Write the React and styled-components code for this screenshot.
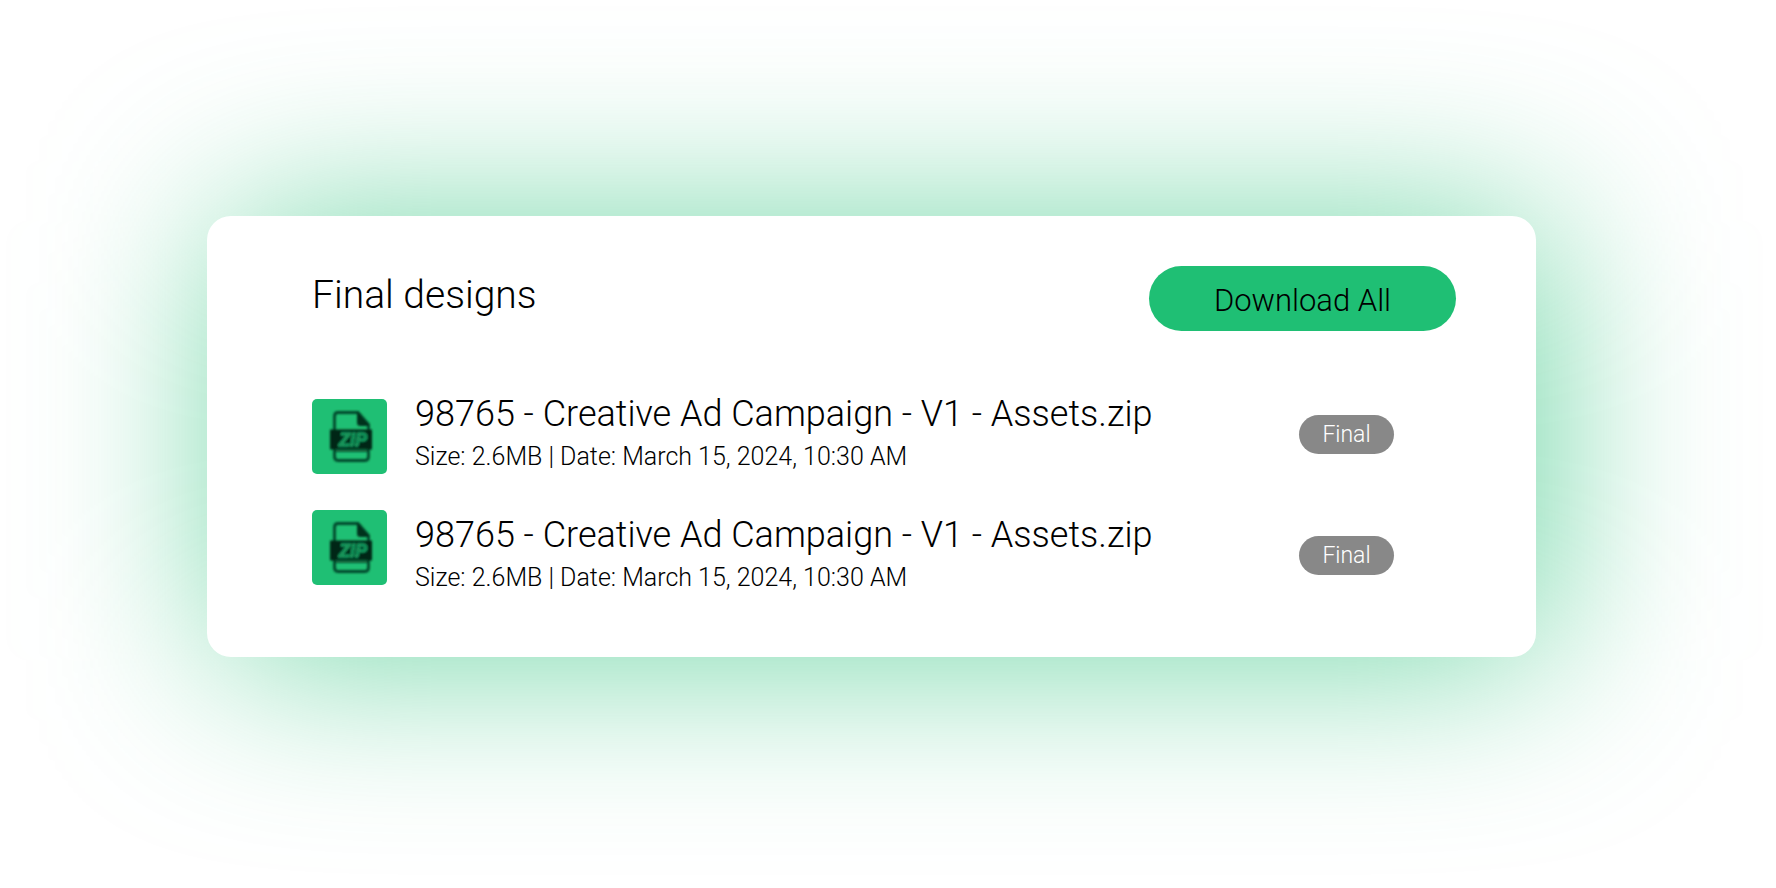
import React from 'react';
import styled, { createGlobalStyle } from 'styled-components';

const GREEN = '#1fbf74';

const GlobalStyle = createGlobalStyle`
  *, *::before, *::after { box-sizing: border-box; }
  body {
    margin: 0;
    background: #fff;
    color: #000;
    font-family: Roboto, "Liberation Sans", sans-serif;
    font-weight: 300;
  }
`;

const Page = styled.main`
  min-height: 100vh;
  padding: 216px 240px 231px 207px;
  overflow: hidden;
`;

const Glow = styled.div`
  position: relative;
  isolation: isolate;

  &::before {
    content: "";
    position: absolute;
    z-index: -1;
    inset: 4px -13px -4px 13px;
    border-radius: 24px;
    background: rgba(31, 191, 116, 0.64);
    filter: blur(92px);
    will-change: filter;
  }
`;

const Card = styled.section`
  padding: 50px 80px 62px 105px;
  border-radius: 24px;
  background: #fff;
`;

const Header = styled.header`
  display: flex;
  align-items: center;
  justify-content: space-between;
  margin-bottom: 58px;
`;

const Title = styled.h1`
  margin: 0;
  padding-bottom: 8px;
  font-size: 39px;
  font-weight: 300;
  line-height: 48px;
`;

const DownloadButton = styled.button`
  width: 307px;
  height: 65px;
  padding: 4px 0 0;
  border: 0;
  border-radius: 33px;
  background: ${GREEN};
  color: #000;
  font: inherit;
  font-size: 31px;
  line-height: 40px;
  cursor: pointer;
`;

const FileList = styled.ul`
  display: flex;
  flex-direction: column;
  gap: 36px;
  margin: 0;
  padding: 0 62px 0 0;
  list-style: none;
`;

const FileRow = styled.li`
  display: flex;
  align-items: flex-end;
`;

const FileTile = styled.div`
  flex: none;
  align-self: ${({ $align }) => $align};
  width: 75px;
  height: 75px;
  margin-right: 28px;
  border-radius: 5px;
  background: ${GREEN};

  svg { display: block; }
`;

const FileText = styled.div`
  flex: 1;
  min-width: 0;
`;

const FileName = styled.h2`
  margin: 0;
  font-size: 36px;
  font-weight: 300;
  line-height: 51px;
`;

const FileMeta = styled.p`
  margin: 0;
  font-size: 25px;
  line-height: 34px;
`;

const Badge = styled.span`
  flex: none;
  width: 95px;
  height: 39px;
  margin-bottom: 20px;
  border-radius: 20px;
  background: #888;
  color: #fff;
  font-size: 23px;
  line-height: 40px;
  text-align: center;
`;

function ZipIcon() {
  return (
    <svg width="75" height="75" viewBox="0 0 75 75" aria-hidden="true">
      <defs>
        <filter id="soft" x="-10%" y="-10%" width="120%" height="120%">
          <feGaussianBlur stdDeviation="0.8" />
        </filter>
      </defs>
      <g filter="url(#soft)">
        <path
          d="M22.5 31V17q0-3.500 3.500-3.500H46L56.500 25.500V31M22.500 50V57.500q0 4 3.500 4H53q3.500 0 3.500-4V50"
          fill="none"
          stroke="#06462a"
          strokeWidth="2.800"
        />
        <path d="M45 12.500L58 27H48.500Q45 27 45 23.500Z" fill="#03301c" />
        <rect x="18" y="30.500" width="42" height="20" fill="#022818" />
        <path
          d="M24 52H55"
          fill="none"
          stroke="#0a5836"
          strokeWidth="2"
        />
        <text
          x="27"
          y="47"
          fontFamily="Liberation Sans, sans-serif"
          fontSize="18"
          fontWeight="700"
          fontStyle="italic"
          fill="#117a4b"
          stroke="#1fbf74"
          strokeWidth="0.800"
        >
          ZIP
        </text>
      </g>
    </svg>
  );
}

const files = [
  {
    id: 1,
    name: '98765 - Creative Ad Campaign - V1 - Assets.zip',
    meta: 'Size: 2.6MB | Date: March 15, 2024, 10:30 AM',
    status: 'Final',
    align: 'flex-end',
  },
  {
    id: 2,
    name: '98765 - Creative Ad Campaign - V1 - Assets.zip',
    meta: 'Size: 2.6MB | Date: March 15, 2024, 10:30 AM',
    status: 'Final',
    align: 'flex-start',
  },
];

export default function App() {
  return (
    <>
      <GlobalStyle />
      <Page>
        <Glow>
          <Card>
            <Header>
              <Title>Final designs</Title>
              <DownloadButton type="button">Download All</DownloadButton>
            </Header>
            <FileList>
              {files.map((file) => (
                <FileRow key={file.id}>
                  <FileTile $align={file.align}>
                    <ZipIcon />
                  </FileTile>
                  <FileText>
                    <FileName>{file.name}</FileName>
                    <FileMeta>{file.meta}</FileMeta>
                  </FileText>
                  <Badge>{file.status}</Badge>
                </FileRow>
              ))}
            </FileList>
          </Card>
        </Glow>
      </Page>
    </>
  );
}
